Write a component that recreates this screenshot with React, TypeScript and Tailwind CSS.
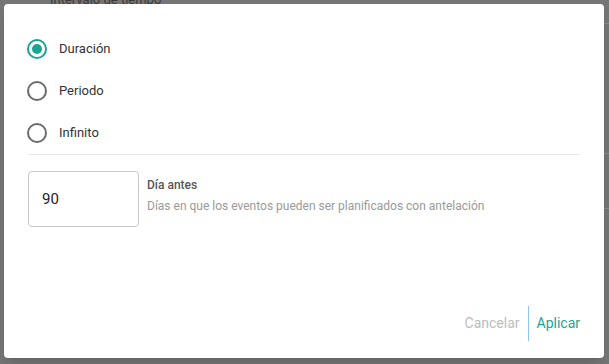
import React from "react";

function Radio({ checked, label }: { checked?: boolean; label: string }) {
  return (
    <div className="flex items-center h-[42px]">
      <div className="w-[42px] h-[42px] flex items-center justify-center -ml-[12px]">
        {checked ? (
          <div className="w-[20px] h-[20px] rounded-full border-2 border-[#1ba394] flex items-center justify-center">
            <div className="w-[10px] h-[10px] rounded-full bg-[#1ba394]" />
          </div>
        ) : (
          <div className="w-[20px] h-[20px] rounded-full border-2 border-[#6b6b6b]" />
        )}
      </div>
      <span className="ml-[1px] text-[13px] text-[#333333]">{label}</span>
    </div>
  );
}

export default function App() {
  return (
    <div
      className="relative w-[609px] h-[364px] bg-[#757575] overflow-hidden"
      style={{ fontFamily: "Roboto, 'Noto Sans', sans-serif" }}
    >
      {/* faint background hints */}
      <div className="absolute left-[50px] -top-[10px] text-[13px] text-[#3a3a3a]">Intervalo de tiempo</div>
      <div className="absolute right-0 top-[23px] w-[5px] h-px bg-[#8a8a8a]" />
      <div className="absolute right-0 top-[153px] w-[5px] h-px bg-[#8a8a8a]" />
      <div className="absolute right-0 top-[208px] w-[5px] h-px bg-[#8a8a8a]" />

      <div className="absolute left-[4px] top-[4px] w-[600px] h-[354px] bg-white rounded-[4px] shadow-lg flex flex-col px-[24px]">
        <div className="pt-[24px] flex flex-col">
          <Radio checked label="Duración" />
          <Radio label="Periodo" />
          <Radio label="Infinito" />
        </div>
        <div className="h-px bg-[#e6e6e6]" />
        <div className="mt-[16px] flex">
          <div className="w-[111px] h-[56px] border border-[#c8c8c8] rounded-[4px] flex items-center pl-[13px] text-[15px] text-[#222222]">
            90
          </div>
          <div className="ml-[8px] flex flex-col pt-[6px]">
            <span className="text-[12px] font-medium text-[#555555] leading-[16px]">Día antes</span>
            <span className="mt-[5px] text-[12px] text-[#9a9a9a] leading-[16px]">
              Días en que los eventos pueden ser planificados con antelación
            </span>
          </div>
        </div>
        <div className="flex-1" />
        <div className="flex justify-end items-center mb-[17px]">
          <span className="text-[14px] text-[#bdbdbd]">Cancelar</span>
          <div className="ml-[8px] w-px h-[35px] bg-[#90c4ee]" />
          <span className="ml-[8px] text-[14px] text-[#1ba394]">Aplicar</span>
        </div>
      </div>
    </div>
  );
}
